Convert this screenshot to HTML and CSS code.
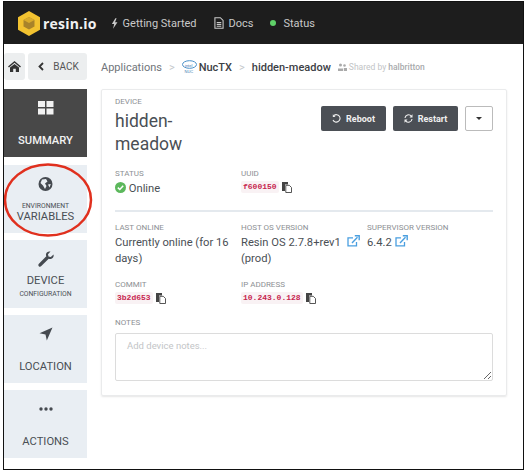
FILE: index.html
```html
<!DOCTYPE html>
<html lang="en">
  <head>
    <meta charset="UTF-8" />
    <title>hidden-meadow - resin.io</title>
    <link rel="stylesheet" href="styles.css">
  </head>
  <body>
    <div class="frame">
      <header class="topbar">
        <svg class="logo" width="26" height="27" viewBox="0 0 26 27">
          <path d="M13 1 24 7.2V19.8L13 26 2 19.8V7.2Z" fill="#f2c230"/>
          <path d="M13 7 18.5 10V16.5L13 19.5 7.5 16.5V10Z" fill="#a8832a"/>
          <path d="M13 7 18.5 10 13 13 7.5 10Z" fill="#d9ab2c"/>
        </svg>
        <span class="brand">resin.io</span>
        <nav class="topnav">
          <a class="topnav-item">
            <svg width="7" height="11" viewBox="0 0 8 12"><path d="M5 0 1 6.5H3.6L2.4 12 7.4 4.6H4.6L6.4 0Z" fill="#c9c9c9"/></svg>
            Getting Started
          </a>
          <a class="topnav-item">
            <svg width="10" height="12" viewBox="0 0 11 13"><path d="M1 .7H7L10 3.7V12.3H1ZM3 6H8M3 8H8M3 10H8" fill="none" stroke="#c9c9c9" stroke-width="1.2"/></svg>
            Docs
          </a>
          <a class="topnav-item status-item">
            <span class="status-dot"></span>
            Status
          </a>
        </nav>
      </header>

      <div class="page">
        <aside class="sidebar">
          <div class="top-buttons">
            <button class="small-btn home-btn">
              <svg width="13" height="11" viewBox="0 0 13 11"><path d="M6.5 0 13 5.6 12 6.4 6.5 1.8 1 6.4 0 5.6ZM2 6.6 6.5 3 11 6.6V11H7.8V7.8H5.2V11H2Z" fill="#333"/></svg>
            </button>
            <button class="small-btn back-btn">
              <svg width="6" height="9" viewBox="0 0 6 9"><path d="M5 1 1.5 4.5 5 8" fill="none" stroke="#333" stroke-width="1.8"/></svg>
              <span>BACK</span>
            </button>
          </div>

          <a class="side-item active">
            <svg width="17" height="14" viewBox="0 0 17 14"><path d="M1 0H8V6H1ZM9.500 0H16.500V6H9.500ZM1 7.500H8V13.500H1ZM9.500 7.500H16.500V13.500H9.500Z" fill="#f2f2f2"/></svg>
            <span class="side-main">SUMMARY</span>
          </a>
          <a class="side-item env-item">
            <svg width="15" height="15" viewBox="0 0 15 15"><circle cx="7.5" cy="7.5" r="7" fill="#454a50"/><path d="M4 3 8 2.5 9.5 5 7 7 8.5 9.5 7 12.5 5 9 2.5 6.5ZM10 8 12.8 7.5 11.5 11Z" fill="#e9eef3"/></svg>
            <span class="side-sub">ENVIRONMENT</span>
            <span class="side-main tight">VARIABLES</span>
          </a>
          <a class="side-item device-item">
            <svg width="16" height="16" viewBox="0 0 16 16"><path d="M15.5 3.5 12.8 6 10.5 5.5 10 3.2 12.5.6C10.500 0 8.300 1 8 3.200 7.900 4 8 4.700 8.300 5.300L.9 12.700C.100 13.500.100 14.500.800 15.200 1.500 15.900 2.500 15.900 3.300 15.100L10.700 7.700C11.300 8 12 8.100 12.800 8 15 7.700 16.100 5.500 15.500 3.500Z" fill="#454a50"/></svg>
            <span class="side-main">DEVICE</span>
            <span class="side-sub">CONFIGURATION</span>
          </a>
          <a class="side-item">
            <svg width="14" height="14" viewBox="0 0 14 14"><path d="M13.500.5 7.800 13.500 6.500 7.500 .5 6.300Z" fill="#454a50"/></svg>
            <span class="side-main">LOCATION</span>
          </a>
          <a class="side-item">
            <svg width="14" height="14" viewBox="0 0 14 14"><circle cx="2" cy="7" r="1.700" fill="#454a50"/><circle cx="7" cy="7" r="1.700" fill="#454a50"/><circle cx="12" cy="7" r="1.700" fill="#454a50"/></svg>
            <span class="side-main">ACTIONS</span>
          </a>

          <svg class="highlight" width="90" height="76" viewBox="0 0 90 76">
            <ellipse cx="45" cy="38" rx="43" ry="35.500" fill="none" stroke="#e0301e" stroke-width="2.500"/>
          </svg>
        </aside>

        <main class="content">
          <div class="breadcrumb">
            <span>Applications</span>
            <span class="sep">&gt;</span>
            <svg class="intel" width="15" height="14" viewBox="0 0 15 14"><ellipse cx="7.500" cy="4.500" rx="7" ry="3.800" fill="none" stroke="#4a90c8" stroke-width="1"/><text x="3" y="6.500" class="intel-text">intel</text><text x="2.500" y="13" class="intel-text">NUC</text></svg>
            <b class="crumb-strong">NucTX</b>
            <span class="sep">&gt;</span>
            <b class="crumb-strong">hidden-meadow</b>
            <svg class="shared-icon" width="9" height="8" viewBox="0 0 9 8"><circle cx="2.500" cy="2" r="1.500" fill="#aaa"/><circle cx="6.500" cy="2.500" r="1.300" fill="#aaa"/><path d="M0 8V5.500H5V8ZM5.800 8V5H9V8Z" fill="#aaa"/></svg>
            <span class="shared">Shared by <b>halbritton</b></span>
          </div>

          <section class="card">
            <div class="card-head">
              <div class="title-block">
                <div class="label">DEVICE</div>
                <h1>hidden-<br>meadow</h1>
              </div>
              <div class="actions">
                <button class="dark-btn">
                  <svg width="9" height="9" viewBox="0 0 9 9"><path d="M2 1.500A3.700 3.700 0 1 1 1 6" fill="none" stroke="#eee" stroke-width="1.100"/><path d="M.8 .3V3H3.500Z" fill="#eee"/></svg>
                  Reboot
                </button>
                <button class="dark-btn">
                  <svg width="9" height="9" viewBox="0 0 9 9"><path d="M1 4A3.500 3.500 0 0 1 7.300 2.200M8 5A3.500 3.500 0 0 1 1.700 6.800" fill="none" stroke="#eee" stroke-width="1.100"/><path d="M8.500 .3V3.500H5.500ZM.5 8.700V5.500H3.500Z" fill="#eee"/></svg>
                  Restart
                </button>
                <button class="caret-btn"><span class="caret"></span></button>
              </div>
            </div>

            <div class="row status-row">
              <div class="col">
                <div class="label">STATUS</div>
                <div class="value">
                  <svg class="check" width="11" height="11" viewBox="0 0 11 11"><circle cx="5.500" cy="5.500" r="5.500" fill="#5cb85c"/><path d="M2.800 5.600 4.800 7.500 8.200 3.800" fill="none" stroke="#fff" stroke-width="1.500"/></svg>
                  Online
                </div>
              </div>
              <div class="col">
                <div class="label">UUID</div>
                <div class="code-line"><code>f600150</code><svg class="copy" width="10" height="11" viewBox="0 0 10 11"><path d="M0 0H6V2.500H3V9H0Z" fill="#444"/><path d="M3.800 3.300H7.300L9.500 5.500V10.500H3.800Z" fill="#fff" stroke="#444" stroke-width=".9"/></svg></div>
              </div>
            </div>

            <hr class="divider" />

            <div class="row info-row">
              <div class="col">
                <div class="label">LAST ONLINE</div>
                <div class="value">Currently online (for 16 days)</div>
              </div>
              <div class="col">
                <div class="label">HOST OS VERSION</div>
                <div class="value">Resin OS 2.7.8+rev1 <svg class="ext" width="13" height="12" viewBox="0 0 13 12"><path d="M9.500 7V10.800H1V2.800H6" fill="none" stroke="#4a9fe0" stroke-width="1.300"/><path d="M5 8 10.500 2.200M7.800 .8H12.200V5.200" fill="none" stroke="#4a9fe0" stroke-width="1.400"/></svg> (prod)</div>
              </div>
              <div class="col col-narrow">
                <div class="label">SUPERVISOR VERSION</div>
                <div class="value">6.4.2 <svg class="ext ext-close" width="13" height="12" viewBox="0 0 13 12"><path d="M9.500 7V10.800H1V2.800H6" fill="none" stroke="#4a9fe0" stroke-width="1.300"/><path d="M5 8 10.500 2.200M7.800 .8H12.200V5.200" fill="none" stroke="#4a9fe0" stroke-width="1.400"/></svg></div>
              </div>
            </div>

            <div class="row commit-row">
              <div class="col">
                <div class="label">COMMIT</div>
                <div class="code-line"><code>3b2d653</code><svg class="copy" width="10" height="11" viewBox="0 0 10 11"><path d="M0 0H6V2.500H3V9H0Z" fill="#444"/><path d="M3.800 3.300H7.300L9.500 5.500V10.500H3.800Z" fill="#fff" stroke="#444" stroke-width=".9"/></svg></div>
              </div>
              <div class="col">
                <div class="label">IP ADDRESS</div>
                <div class="code-line"><code>10.243.0.128</code><svg class="copy" width="10" height="11" viewBox="0 0 10 11"><path d="M0 0H6V2.500H3V9H0Z" fill="#444"/><path d="M3.800 3.300H7.300L9.500 5.500V10.500H3.800Z" fill="#fff" stroke="#444" stroke-width=".9"/></svg></div>
              </div>
            </div>

            <div class="label notes-label">NOTES</div>
            <textarea class="notes" placeholder="Add device notes..."></textarea>
          </section>
        </main>
      </div>
    </div>
  </body>
</html>
```

FILE: styles.css
```css
* {
  box-sizing: border-box;
}

body {
  margin: 0;
  background-color: #fff;
  font-family: Roboto, "Liberation Sans", sans-serif;
  color: #4a4f55;
}

.frame {
  width: 521px;
  height: 469px;
  margin: 1px 0 0 3px;
  border: 1px solid #111;
  overflow: hidden;
}

.topbar {
  display: flex;
  align-items: center;
  height: 42px;
  padding-left: 12px;
  background-color: #1d1d1d;
}

.brand {
  margin-left: 1px;
  color: #f1f1f1;
  font-family: "Open Sans", sans-serif;
  font-size: 14px;
  font-weight: 700;
  letter-spacing: 0.2px;
}

.topnav {
  display: flex;
  gap: 17px;
  margin-left: 14px;
}

.topnav-item {
  display: flex;
  align-items: center;
  gap: 5px;
  color: #c9c9c9;
  font-size: 11px;
}

.status-item {
  gap: 7px;
}

.status-dot {
  width: 6px;
  height: 6px;
  border-radius: 50%;
  background-color: #5fd068;
}

.page {
  display: flex;
}

.sidebar {
  position: relative;
  display: flex;
  flex-direction: column;
  flex: none;
  gap: 7.300px;
  width: 83px;
  padding-top: 9px;
}

.top-buttons {
  display: flex;
  gap: 3px;
  height: 27px;
  margin-bottom: 2px;
}

.small-btn {
  display: flex;
  align-items: center;
  justify-content: center;
  padding: 0;
  border: none;
  border-radius: 3px;
  background-color: #eceeef;
  color: #555;
  font-family: inherit;
  font-size: 10px;
}

.home-btn {
  width: 21px;
}

.back-btn {
  gap: 9px;
  width: 59px;
  padding-left: 2px;
}

.side-item {
  display: flex;
  flex-direction: column;
  align-items: center;
  height: 68px;
  padding-top: 11px;
  background-color: #e9eef3;
  color: #4a4f55;
}

.side-item svg {
  flex: none;
  height: 16px;
  margin-bottom: 17px;
}

.env-item svg {
  margin-bottom: 9px;
}

.device-item svg {
  margin-bottom: 6px;
}

.side-item.active {
  background-color: #484848;
  color: #f2f2f2;
}

.side-main {
  font-size: 11.200px;
  line-height: 16px;
}

.active .side-main {
  font-weight: 500;
}

.side-main.tight {
  line-height: 11px;
}

.side-sub {
  font-size: 6.800px;
  line-height: 10px;
}

.highlight {
  position: absolute;
  top: 118px;
  left: -1px;
}

.content {
  flex: 1;
  padding: 9px 16px 0 14px;
}

.breadcrumb {
  display: flex;
  align-items: center;
  gap: 5px;
  height: 28px;
  margin-bottom: 8px;
  color: #70757a;
  font-size: 11px;
}

.sep {
  margin: 0 2px;
  color: #c4c8cc;
}

.intel {
  margin-right: -3px;
}

.crumb-strong {
  color: #3c4045;
  font-weight: 500;
}

.intel-text {
  fill: #3a78b0;
  font-size: 4px;
  font-family: "Liberation Sans", sans-serif;
}

.shared-icon {
  margin-left: 2px;
}

.shared {
  margin-left: -3px;
  color: #c2c4c6;
  font-size: 8.500px;
}

.shared b {
  color: #a9abad;
  font-weight: 500;
}

.card {
  height: 307px;
  padding: 7px 13px;
  border: 1px solid #eaebec;
  border-radius: 2px;
  box-shadow: 0 1px 2px rgba(0, 0, 0, 0.1);
}

.card-head {
  display: flex;
  justify-content: space-between;
  height: 72px;
}

.label {
  color: #8d9094;
  font-size: 8px;
  line-height: 9px;
}

h1 {
  margin: 4px 0 0;
  color: #4a4f55;
  font-size: 17.500px;
  font-weight: 400;
  line-height: 23px;
}

.actions {
  display: flex;
  gap: 7px;
  height: 25px;
  margin-top: 9px;
}

.dark-btn {
  display: flex;
  align-items: center;
  justify-content: center;
  gap: 5px;
  width: 65px;
  padding: 0;
  border: none;
  border-radius: 2px;
  background-color: #4b4f55;
  color: #f0f0f0;
  font-family: inherit;
  font-size: 9px;
  font-weight: 700;
}

.caret-btn {
  display: flex;
  align-items: center;
  justify-content: center;
  width: 28px;
  padding: 0;
  border: 1px solid #bbb;
  border-radius: 2px;
  background-color: #fff;
}

.caret {
  border-top: 3px solid #333;
  border-left: 3px solid transparent;
  border-right: 3px solid transparent;
}

.row {
  display: flex;
}

.col {
  flex: none;
  width: 126px;
}

.col-narrow {
  width: 100px;
}

.status-row {
  height: 41px;
}

.value {
  margin-top: 3px;
  color: #4a4f55;
  font-size: 11.200px;
  line-height: 16px;
}

.check {
  vertical-align: -1px;
}

.ext {
  margin-left: 3px;
  vertical-align: -1px;
}

.ext-close {
  margin-left: 0;
}

.code-line {
  display: flex;
  align-items: center;
  gap: 3px;
  margin-top: 3px;
}

code {
  padding: 1px 2px;
  border-radius: 2px;
  background-color: #f9f2f4;
  color: #c7254e;
  font-family: "Liberation Mono", monospace;
  font-size: 8px;
  font-weight: 700;
  line-height: 10px;
}

.divider {
  height: 2px;
  margin: 0 0 11px;
  border: none;
  background-color: #e4e9ee;
}

.info-row {
  height: 57px;
}

.commit-row {
  height: 38px;
}

.notes-label {
  margin-bottom: 6px;
}

.notes {
  display: block;
  width: 100%;
  height: 48px;
  padding: 6px 11px;
  border: 1px solid #dcdcdc;
  border-radius: 2px;
  color: #555;
  font-family: inherit;
  font-size: 9.500px;
}

.notes::placeholder {
  color: #c3c5c7;
}
```
